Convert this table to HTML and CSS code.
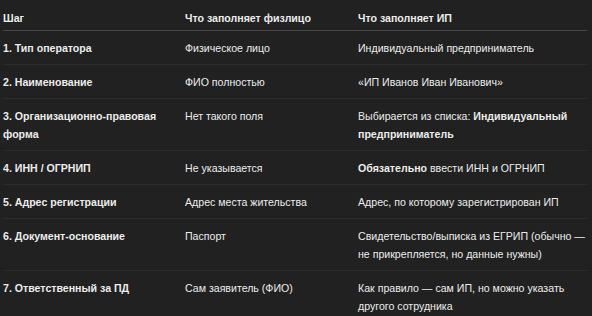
FILE: index.html
```html
<!DOCTYPE html>
<html lang="ru">
<head>
<meta charset="utf-8">
<link rel="stylesheet" href="styles.css">
</head>
<body>
<table class="grid">
  <colgroup>
    <col class="c1">
    <col class="c2">
    <col class="c3">
  </colgroup>
  <thead>
    <tr>
      <th>Шаг</th>
      <th>Что заполняет физлицо</th>
      <th>Что заполняет ИП</th>
    </tr>
  </thead>
  <tbody>
    <tr>
      <td><strong>1. Тип оператора</strong></td>
      <td>Физическое лицо</td>
      <td>Индивидуальный предприниматель</td>
    </tr>
    <tr>
      <td><strong>2. Наименование</strong></td>
      <td>ФИО полностью</td>
      <td>«ИП Иванов Иван Иванович»</td>
    </tr>
    <tr>
      <td><strong>3. Организационно-правовая форма</strong></td>
      <td>Нет такого поля</td>
      <td>Выбирается из списка: <strong>Индивидуальный предприниматель</strong></td>
    </tr>
    <tr>
      <td><strong>4. ИНН / ОГРНИП</strong></td>
      <td>Не указывается</td>
      <td><strong>Обязательно</strong> ввести ИНН и ОГРНИП</td>
    </tr>
    <tr>
      <td><strong>5. Адрес регистрации</strong></td>
      <td>Адрес места жительства</td>
      <td>Адрес, по которому зарегистрирован ИП</td>
    </tr>
    <tr>
      <td><strong>6. Документ-основание</strong></td>
      <td>Паспорт</td>
      <td>Свидетельство/выписка из ЕГРИП (обычно — не прикрепляется, но данные нужны)</td>
    </tr>
    <tr>
      <td><strong>7. Ответственный за ПД</strong></td>
      <td>Сам заявитель (ФИО)</td>
      <td>Как правило — сам ИП, но можно указать другого сотрудника</td>
    </tr>
  </tbody>
</table>
</body>
</html>
```

FILE: styles.css
```css
html, body {
  margin: 0;
  padding: 0;
  background: #212121;
}

body {
  color: #ececec;
  font-family: "Liberation Sans", Arial, sans-serif;
  font-size: 10.6px;
  line-height: 18px;
}

.grid {
  margin-left: 3px;
  width: 584px;
  border-collapse: collapse;
  table-layout: fixed;
}

.c1 { width: 182px; }
.c2 { width: 173px; }
.c3 { width: auto; }

.grid th {
  text-align: left;
  font-weight: 700;
  padding: 9px 6px 3px 0;
  border-bottom: 1px solid #454545;
  vertical-align: top;
}

.grid td {
  padding: 8px 6px 7px 0;
  border-bottom: 1px solid #2c2c2c;
  vertical-align: top;
}

.grid th:last-child,
.grid td:last-child {
  padding-right: 0;
}

.grid tbody tr:last-child td {
  border-bottom: none;
}

.grid strong {
  font-weight: 700;
}
```
